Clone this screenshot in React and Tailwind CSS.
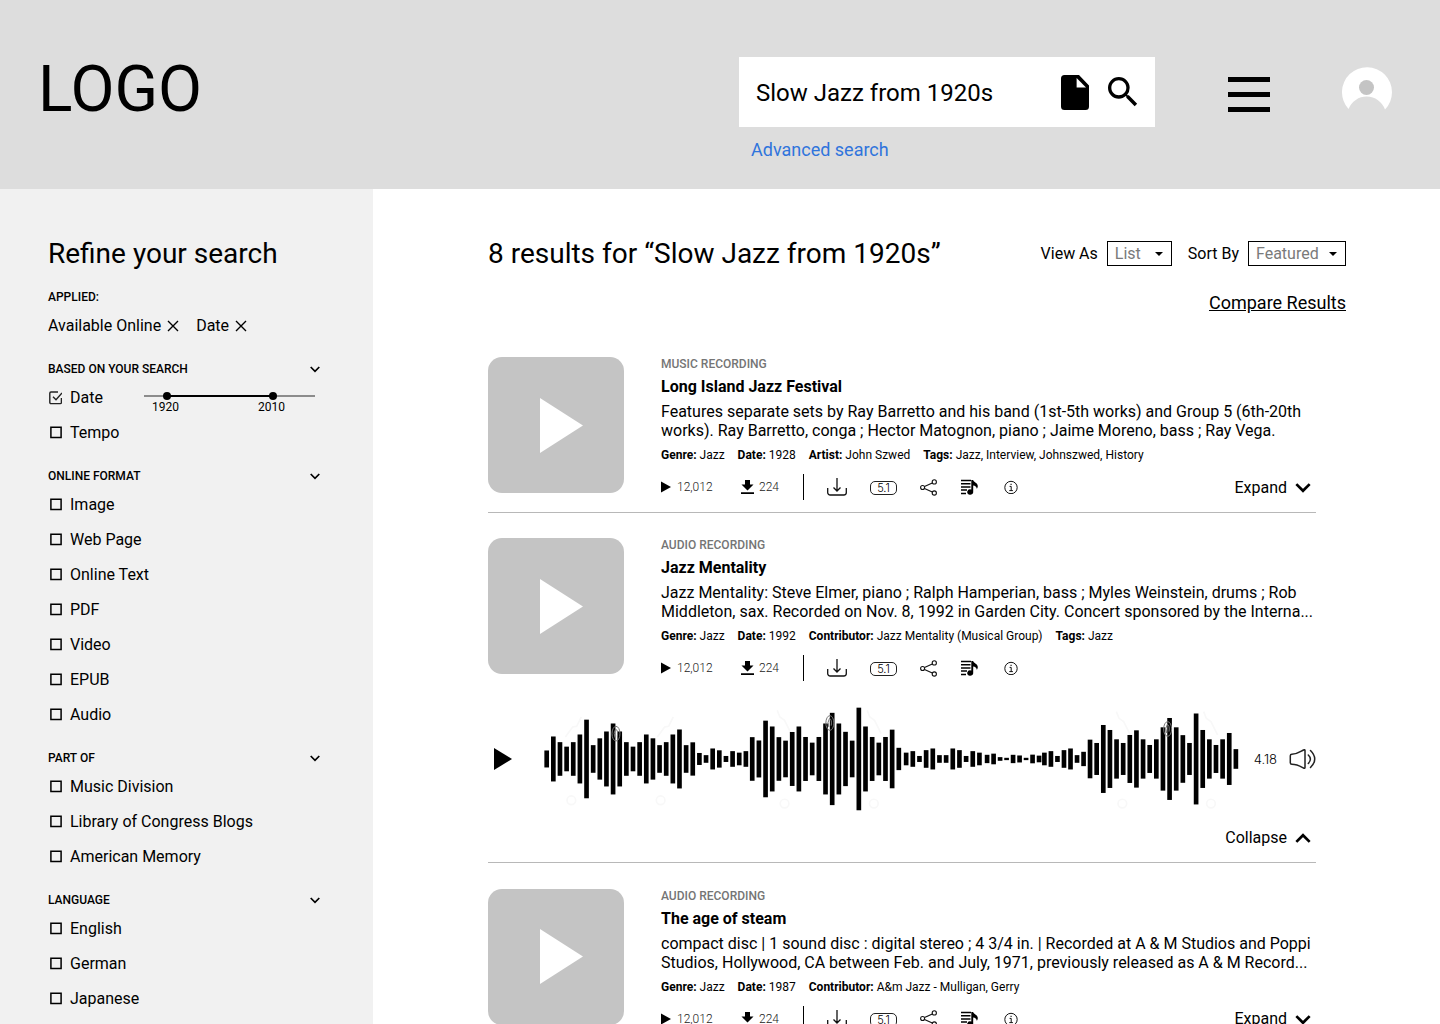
import { useState } from "react";
import { MdSearch } from "react-icons/md";

/* Bars as [centre x, height]; units are thirds of a pixel. */
const even = (start, step, heights) => heights.map((h, i) => [start + step * i, h]);
const BARS = [
  ...even(8, 19.93, [51, 135, 101, 74, 101, 147, 236, 83, 124, 165, 213, 165, 101, 74, 101, 147, 124, 83, 101, 147, 177, 83, 100, 36, 23, 63, 52, 18, 47, 38, 47]),
  ...even(625, 20, [131, 111, 230, 195, 131, 110, 162, 195, 132, 98, 132, 213, 277, 213, 163, 110, 308, 195, 132, 98, 132, 176, 67]),
  ...even(1087, 20, [38, 47, 18, 53, 63, 23, 23, 63, 53, 18, 47, 38]),
  ...even(1330, 19.5, [25, 32, 11, 7, 25, 21, 7, 26, 20]),
  ...even(1502, 19.6, [38, 47, 18, 53, 63, 23, 43]),
  ...even(1639, 19.9, [116, 96, 204, 174, 118, 96, 144, 172, 118, 84, 118, 190, 246, 190, 143, 96, 273, 174, 118, 84, 118, 156, 59]),
];

function Waveform() {
  return (
    <svg viewBox="0 0 2088 312" className="block min-w-0 flex-1" role="img" aria-label="Audio waveform">
      <g fill="none" stroke="#f8f8f8" strokeWidth="5">
        {[[64, 90], [340, 90]].map(([x, y]) => (
          <path key={x} d={`M${x} ${y}l22-30l12-2l14-28`} />
        ))}
        {[[700, 10], [970, 10], [1718, 14], [1980, 14]].map(([x, y]) => (
          <path key={x} d={`M${x} ${y}l8 20l14 10l20 40`} />
        ))}
        {[[82, 280], [350, 280], [722, 290], [990, 290], [1736, 290], [2002, 290]].map(([x, y]) => (
          <circle key={x} cx={x} cy={y} r="13" />
        ))}
      </g>
      {BARS.map(([x, h]) => (
        <rect key={x} x={x - 7} y={156 - h / 2} width="14" height={h} />
      ))}
      <g fill="none" stroke="#777" strokeWidth="3">
        {[[216, 80], [858, 48], [1872, 66]].map(([x, y]) => (
          <g key={x}>
            <ellipse cx={x} cy={y} rx="12" ry="22" />
            <path d={`M${x - 3} ${y + 12}q-6-14 2-26q8 4 5 22`} />
          </g>
        ))}
      </g>
    </svg>
  );
}

function Chevron({ up, className }) {
  return (
    <svg viewBox="0 0 14 9" className={className} fill="none" stroke="currentColor" strokeWidth="2.4" aria-hidden="true">
      <path d={up ? "M1 8l6-6 6 6" : "M1 1l6 6 6-6"} />
    </svg>
  );
}

function Close() {
  return (
    <svg viewBox="0 0 12 12" className="size-3" fill="none" stroke="currentColor" strokeWidth="1.4" aria-hidden="true">
      <path d="M1 1l10 10M11 1L1 11" />
    </svg>
  );
}

function DateRange() {
  const [from, setFrom] = useState(1920);
  const [to, setTo] = useState(2010);
  const pct = (y) => ((y - 1904) / 138) * 100;
  const range =
    "pointer-events-none absolute inset-x-0 top-0 h-2 w-full appearance-none bg-transparent [&::-webkit-slider-thumb]:pointer-events-auto [&::-webkit-slider-thumb]:size-2 [&::-webkit-slider-thumb]:appearance-none [&::-webkit-slider-thumb]:rounded-full [&::-webkit-slider-thumb]:bg-black";
  return (
    <div className="relative mt-2 mr-1.5 h-5 w-[171px]">
      <div className="absolute inset-x-0 top-[3px] h-0.5 bg-[#8c8c8c]" />
      <div className="absolute inset-x-1 top-[3px] h-0.5">
        <div className="absolute h-full bg-black" style={{ left: `${pct(from)}%`, right: `${100 - pct(to)}%` }} />
      </div>
      <input type="range" aria-label="From year" min="1904" max="2042" value={from} onChange={(e) => setFrom(+e.target.value)} className={range} />
      <input type="range" aria-label="To year" min="1904" max="2042" value={to} onChange={(e) => setTo(+e.target.value)} className={range} />
      <div className="flex gap-[79px] pt-2 pl-2 text-xs leading-[14px]">
        <output>{from}</output>
        <output>{to}</output>
      </div>
    </div>
  );
}

function Option({ label, checked, children }) {
  return (
    <li className="flex h-[19px] items-center justify-between">
      <label className="flex items-center gap-2">
        <span className="relative size-3.5">
          <input type="checkbox" defaultChecked={checked} className="peer block size-3.5 appearance-none" />
          <svg viewBox="0 0 14 14" className="pointer-events-none absolute inset-0 size-3.5 peer-checked:hidden" fill="none" stroke="#000" strokeWidth="1.5" aria-hidden="true">
            <path d="M2.900 1.300h10.200v10.200H2.900z" />
          </svg>
          <svg viewBox="0 0 14 14" className="pointer-events-none absolute inset-0 hidden size-3.5 peer-checked:block" fill="none" stroke="#222" strokeWidth="1.4" aria-hidden="true">
            <path d="M10 1H3a1.200 1.200 0 0 0-1.200 1.200v9.200A1.200 1.200 0 0 0 3 12.600h9.200a1.200 1.200 0 0 0 1.200-1.200V7" />
            <path d="M5 5.800l3 3L14 2" />
          </svg>
        </span>
        {label}
      </label>
      {children}
    </li>
  );
}

const FILTERS = [
  ["Based on your search", ["Date", "Tempo"]],
  ["Online format", ["Image", "Web Page", "Online Text", "PDF", "Video", "EPUB", "Audio"]],
  ["Part of", ["Music Division", "Library of Congress Blogs", "American Memory"]],
  ["Language", ["English", "German", "Japanese"]],
];

function Sidebar() {
  return (
    <aside className="w-[373px] shrink-0 bg-[#f1f1f1] pt-12 pr-[52px] pb-4 pl-12">
      <h2 className="text-[28px] leading-[34px]">Refine your search</h2>
      <h3 className="mt-[19px] text-xs leading-[14px] font-medium uppercase">Applied:</h3>
      <div className="mt-3 flex gap-[17px] leading-[19px]">
        {["Available Online", "Date"].map((t) => (
          <button key={t} type="button" className="flex items-center gap-1.5" aria-label={`Remove ${t}`}>
            {t}
            <Close />
          </button>
        ))}
      </div>
      {FILTERS.map(([title, items]) => (
        <section key={title} className="mt-[27px]">
          <h3 className="text-xs leading-[14px] font-medium uppercase">
            <button type="button" className="flex w-full items-center justify-between uppercase">
              {title}
              <Chevron className="mr-px h-[7px] w-2.5" />
            </button>
          </h3>
          <ul className="mt-3 flex flex-col gap-4">
            {items.map((label) => (
              <Option key={label} label={label} checked={label === "Date"}>
                {label === "Date" && <DateRange />}
              </Option>
            ))}
          </ul>
        </section>
      ))}
    </aside>
  );
}

function Header() {
  return (
    <header className="flex h-[189px] items-start bg-[#ddd] pr-12 pl-[38px]">
      <a href="#" className="mt-[52px] text-[64px] leading-[75px]">LOGO</a>
      <div className="mt-[57px] ml-auto w-[416px]">
        <form className="flex h-[70px] items-center bg-white pr-3 pl-[17px]" onSubmit={(e) => e.preventDefault()}>
          <input aria-label="Search" defaultValue="Slow Jazz from 1920s" className="min-w-0 flex-1 pt-0.5 text-2xl leading-7 outline-none" />
          <button type="button" aria-label="Search by file" className="mr-3.5">
            <svg viewBox="0 0 28 35" className="h-[35px] w-7" aria-hidden="true">
              <path d="M3.500 0h14.500l10 10.500v21a3.500 3.500 0 0 1-3.500 3.500h-21a3.500 3.500 0 0 1-3.500-3.500V3.500a3.500 3.500 0 0 1 3.500-3.500z" />
              <path d="M15.600 3v9.600h9.400z" fill="#fff" />
            </svg>
          </button>
          <button type="submit" aria-label="Search">
            <MdSearch className="size-10" />
          </button>
        </form>
        <a href="#" className="ml-3 mt-3 inline-block text-lg leading-[21px] text-[#2f74dc]">Advanced search</a>
      </div>
      <button type="button" aria-label="Menu" className="mt-[77px] ml-[73px] flex w-[42px] flex-col gap-2.5">
        <span className="h-[5px] bg-black" />
        <span className="h-[5px] bg-black" />
        <span className="h-[5px] bg-black" />
      </button>
      <button type="button" aria-label="Account" className="mt-[67px] ml-[72px]">
        <svg viewBox="0 0 50 50" className="size-[50px]" aria-hidden="true">
          <path d="M6.500 42A25 25 0 1 1 43 42.500A19.500 19.500 0 0 0 6.500 42z" fill="#fff" />
          <circle cx="24.500" cy="20.500" r="7.500" fill="#c4c4c4" />
        </svg>
      </button>
    </header>
  );
}

function Select({ label, value, className }) {
  return (
    <label className="flex items-center gap-[9px]">
      <span className="pt-0.5">{label}</span>
      <span className="relative">
        <select className={`block h-[25px] appearance-none border border-black bg-white pl-[7px] text-[#7a7a7a] ${className}`}>
          <option>{value}</option>
        </select>
        <svg viewBox="0 0 8 4" className="pointer-events-none absolute top-[11px] right-[9px] h-1 w-2" aria-hidden="true">
          <path d="M0 0h8L4 4z" />
        </svg>
      </span>
    </label>
  );
}

function Actions() {
  const thin = { fill: "none", stroke: "#111", strokeWidth: 1.1, "aria-hidden": true };
  return (
    <>
      <span className="flex w-20 items-center gap-1.5">
        <svg viewBox="0 0 10 12" className="h-3 w-2.5" aria-hidden="true"><path d="M0 0.500L10 6L0 11.500z" /></svg>
        12,012
      </span>
      <span className="flex w-[62px] items-center gap-[5px]">
        <svg viewBox="0 0 13 14" className="h-3.5 w-[13px]" aria-hidden="true">
          <path d="M4 0h5v4.500h3.500L6.500 10.500L0.500 4.500H4zM0 12.300h13v1.700H0z" />
        </svg>
        224
      </span>
      <span className="mr-[23px] h-[26px] w-px bg-black" />
      <button type="button" aria-label="Save">
        <svg viewBox="0 0 20 18" className="h-[18px] w-5" {...thin} strokeWidth="1.3">
          <path d="M0.700 10v4.500a2.500 2.500 0 0 0 2.500 2.500h13.600a2.500 2.500 0 0 0 2.500-2.500V10M10 0v13M6.500 9.500l3.500 3.500 3.500-3.500" />
        </svg>
      </button>
      <button type="button" aria-label="5.1 surround" className="mt-0.5 ml-[23px] flex h-3.5 w-[27px] items-center justify-center rounded-[5px] border border-[#222] font-['Inter',sans-serif] text-[11px] leading-3 text-black">
        5.1
      </button>
      <button type="button" aria-label="Share" className="ml-[23px]">
        <svg viewBox="0 0 17 17" className="size-[17px]" {...thin}>
          <circle cx="2.600" cy="8.500" r="2" />
          <circle cx="14.300" cy="2.900" r="2.100" />
          <circle cx="14.300" cy="14" r="2.100" />
          <path d="M4.500 7.600L12.300 3.900M4.500 9.400l7.800 3.700" />
        </svg>
      </button>
      <button type="button" aria-label="Playlist" className="ml-6">
        <svg viewBox="0 0 17 16" className="h-4 w-[17px]" aria-hidden="true">
          <path d="M0 1.500h10M0 4.700h9.500M0 7.900h9.500M0 11.100h6M0 14.500h5" stroke="#000" strokeWidth="1.500" />
          <path d="M10.300 1h1.800c.6 2.200 4.700 3 4.700 6 0 1.200-.4 2-1 2.800-.2-1.800-1.600-3-3.600-3.200V13a3 2.700 0 1 1-1.900-2.400z" />
        </svg>
      </button>
      <button type="button" aria-label="Information" className="ml-[26px]">
        <svg viewBox="0 0 14 14" className="size-3.5" {...thin} strokeWidth="1">
          <circle cx="7" cy="7.500" r="6.200" />
          <path d="M5.600 6.400h1.600v4M5.300 10.600h3.600M6.400 4.300h1.400" />
        </svg>
      </button>
    </>
  );
}

function Toggle({ open }) {
  return (
    <button type="button" aria-expanded={open} className="ml-auto flex items-center gap-2 pr-[5px] text-base leading-[19px] font-normal text-black">
      {open ? "Collapse" : "Expand"}
      <Chevron up={open} className="mt-0.5 h-[10px] w-4" />
    </button>
  );
}

const RESULTS = [
  {
    kind: "Music recording",
    title: "Long Island Jazz Festival",
    text: "Features separate sets by Ray Barretto and his band (1st-5th works) and Group 5 (6th-20th works). Ray Barretto, conga ; Hector Matognon, piano ; Jaime Moreno, bass ; Ray Vega.",
    meta: [["Genre", "Jazz"], ["Date", "1928"], ["Artist", "John Szwed"], ["Tags", "Jazz, Interview, Johnszwed, History"]],
  },
  {
    kind: "Audio recording",
    title: "Jazz Mentality",
    text: "Jazz Mentality: Steve Elmer, piano ; Ralph Hamperian, bass ; Myles Weinstein, drums ; Rob Middleton, sax. Recorded on Nov. 8, 1992 in Garden City. Concert sponsored by the Interna...",
    meta: [["Genre", "Jazz"], ["Date", "1992"], ["Contributor", "Jazz Mentality (Musical Group)"], ["Tags", "Jazz"]],
    open: true,
  },
  {
    kind: "Audio recording",
    title: "The age of steam",
    text: "compact disc | 1 sound disc : digital stereo ; 4 3/4 in. | Recorded at A & M Studios and Poppi Studios, Hollywood, CA between Feb. and July, 1971, previously released as A & M Record...",
    meta: [["Genre", "Jazz"], ["Date", "1987"], ["Contributor", "A&m Jazz - Mulligan, Gerry"]],
  },
];

function Result({ kind, title, text, meta, open }) {
  return (
    <li className={`border-b border-[#b8b8b8] pt-[25px] pb-3 ${open ? "mb-px" : ""}`}>
      <div className="flex items-start gap-[37px]">
        <button type="button" aria-label={`Play ${title}`} className="flex size-[136px] shrink-0 items-center justify-center rounded-[14px] bg-[#c4c4c4]">
          <svg viewBox="0 0 43 55" className="ml-[11px] h-[55px] w-[43px]" fill="#fff" aria-hidden="true"><path d="M0 0L43 27.500L0 55z" /></svg>
        </button>
        <div className="min-w-0 flex-1">
          <p className="text-xs leading-[14px] font-medium text-[#757575] uppercase">{kind}</p>
          <h2 className="mt-1.5 leading-[19px] font-bold">{title}</h2>
          <p className="mt-1.5 leading-[19px]">{text}</p>
          <dl className="mt-2 flex gap-[13px] text-xs leading-[14px]">
            {meta.map(([k, v]) => (
              <div key={k} className="flex gap-[3px]">
                <dt className="font-bold">{k}:</dt>
                <dd>{v}</dd>
              </div>
            ))}
          </dl>
          <div className="mt-3 flex h-[26px] items-center text-xs font-light text-[#222]">
            <Actions />
            {!open && <Toggle open={false} />}
          </div>
        </div>
      </div>
      {open && (
        <>
          <div className="mt-[26px] flex items-center pl-1.5">
            <button type="button" aria-label="Play" className="mr-8">
              <svg viewBox="0 0 18 22" className="h-[22px] w-[18px]" aria-hidden="true"><path d="M0 0L18 11L0 22z" /></svg>
            </button>
            <Waveform />
            <span className="ml-3.5 pt-0.5 font-['Inter',sans-serif] text-[13px] font-light">4.18</span>
            <button type="button" aria-label="Volume" className="ml-3">
              <svg viewBox="0 0 27 22" className="h-[22px] w-[27px]" fill="none" stroke="#222" strokeWidth="1.500" strokeLinejoin="round" strokeLinecap="round" aria-hidden="true">
                <path d="M2.800 6.300C8 6.300 10 4.500 14.500 2Q16 1.200 16 2.500v17q0 1.300-1.500.5C10 17.500 8 16.200 2.800 16.200Q1.300 16.200 1.300 14.700V7.800Q1.300 6.300 2.800 6.300z" />
                <path d="M19.300 7q4.200 4 0 8.500M21.500 2.500q8.500 8.500 0 17" />
              </svg>
            </button>
          </div>
          <div className="mt-[17px] mb-[3px] flex"><Toggle open /></div>
        </>
      )}
    </li>
  );
}

export default function App() {
  return (
    <div className="flex min-h-screen flex-col bg-white font-['Roboto',sans-serif] text-base text-black">
      <Header />
      <div className="flex flex-1">
        <Sidebar />
        <main className="min-w-0 flex-1 pt-[47px] pr-[94px] pl-[115px]">
          <div className="flex items-center gap-4">
            <h1 className="mr-auto pt-0.5 text-[28px] leading-8">8 results for “Slow Jazz from 1920s”</h1>
            <Select label="View As" value="List" className="w-[65px]" />
            <Select label="Sort By" value="Featured" className="w-[98px]" />
          </div>
          <div className="mt-[22px] flex justify-end">
            <a href="#" className="text-lg leading-[21px] underline">Compare Results</a>
          </div>
          <ul className="mt-[19px] mr-[30px]">
            {RESULTS.map((r) => (
              <Result key={r.title} {...r} />
            ))}
          </ul>
        </main>
      </div>
    </div>
  );
}
